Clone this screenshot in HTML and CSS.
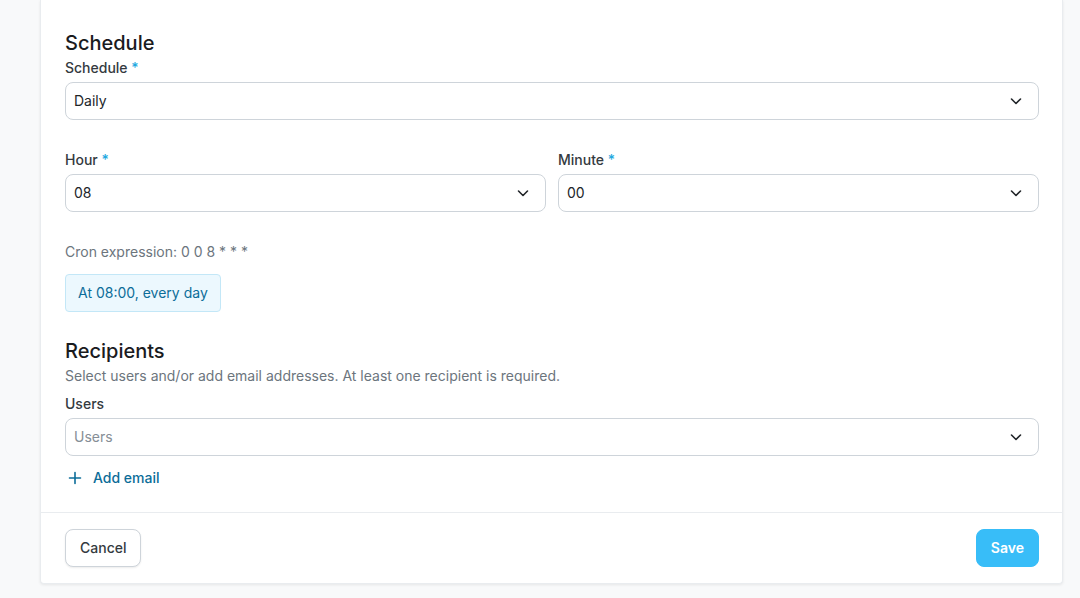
FILE: index.html
```html
<!DOCTYPE html>
<html lang="en">
<head>
    <meta charset="UTF-8">
    <meta name="viewport" content="width=device-width, initial-scale=1.0">
    <title>Report schedule</title>
    <link rel="stylesheet" href="styles.css">
</head>
<body>
    <div class="page">
        <div class="card">
            <div class="card-body">
                <!-- Schedule -->
                <h2 class="section-title">Schedule</h2>
                <label class="field-label">Schedule <span class="req">*</span></label>
                <div class="select">
                    <span>Daily</span>
                    <svg class="chevron" viewBox="0 0 16 16"><path d="M3.5 6l4.5 4.5 4.5-4.5"/></svg>
                </div>

                <div class="row">
                    <div class="col">
                        <label class="field-label">Hour <span class="req">*</span></label>
                        <div class="select">
                            <span>08</span>
                            <svg class="chevron" viewBox="0 0 16 16"><path d="M3.5 6l4.5 4.5 4.5-4.5"/></svg>
                        </div>
                    </div>
                    <div class="col">
                        <label class="field-label">Minute <span class="req">*</span></label>
                        <div class="select">
                            <span>00</span>
                            <svg class="chevron" viewBox="0 0 16 16"><path d="M3.5 6l4.5 4.5 4.5-4.5"/></svg>
                        </div>
                    </div>
                </div>

                <p class="cron">Cron expression: 0 0 8 * * *</p>
                <div class="badge">At 08:00, every day</div>

                <!-- Recipients -->
                <h2 class="section-title recipients">Recipients</h2>
                <p class="hint">Select users and/or add email addresses. At least one recipient is required.</p>
                <label class="field-label users-label">Users</label>
                <div class="select">
                    <span class="placeholder">Users</span>
                    <svg class="chevron" viewBox="0 0 16 16"><path d="M3.5 6l4.5 4.5 4.5-4.5"/></svg>
                </div>

                <button class="link-btn">
                    <svg class="plus" viewBox="0 0 16 16"><path d="M8 2.5v11M2.5 8h11"/></svg>
                    Add email
                </button>
            </div>

            <div class="card-footer">
                <button class="btn btn-default">Cancel</button>
                <button class="btn btn-primary">Save</button>
            </div>
        </div>
    </div>
</body>
</html>
```

FILE: styles.css
```css
* {
    box-sizing: border-box;
}

body {
    margin: 0;
    padding: 0;
    background: #f8f9fa;
    font-family: Inter, "Noto Sans", sans-serif;
    color: #212529;
    font-size: 14px;
    line-height: 20px;
}

.page {
    padding: 0 17px 15px 40px;
}

.card {
    background: #fff;
    border: 1px solid #e9ecef;
    border-top: none;
    border-radius: 0 0 4px 4px;
    box-shadow: 0 1px 3px rgba(0, 0, 0, 0.08);
}

.card-body {
    padding: 29px 23px 24px 24px;
    display: flex;
    flex-direction: column;
    align-items: flex-start;
}

.section-title {
    margin: 0;
    font-size: 20px;
    line-height: 28px;
    font-weight: 500;
    color: #1a1b1e;
}

.section-title.recipients {
    margin-top: 25px;
}

.field-label {
    display: block;
    font-weight: 500;
    color: #343a40;
    margin: 1px 0 4px;
}

.req {
    color: #22a8e0;
}

.select {
    width: 100%;
    height: 38px;
    border: 1px solid #ced4da;
    border-radius: 8px;
    padding: 0 14px 0 8px;
    display: flex;
    align-items: center;
    justify-content: space-between;
    color: #212529;
}

.placeholder {
    color: #868e96;
}

.chevron {
    width: 16px;
    height: 16px;
    fill: none;
    stroke: #212529;
    stroke-width: 1.6;
    stroke-linecap: round;
    stroke-linejoin: round;
}

.row {
    width: 100%;
    display: flex;
    gap: 12px;
    margin-top: 29px;
}

.col {
    flex: 1;
}

.cron {
    margin: 30px 0 0;
    color: #6c757d;
}

.badge {
    margin-top: 12px;
    height: 38px;
    padding: 0 12px;
    display: flex;
    align-items: center;
    background: #ecf8fe;
    border: 1px solid #c3e7f7;
    border-radius: 4px;
    color: #0c6d99;
}

.hint {
    margin: 1px 0 0;
    color: #6c757d;
}

.users-label {
    margin-top: 8px;
}

.link-btn {
    margin-top: 12px;
    padding: 0 0 0 2px;
    border: none;
    background: none;
    font: inherit;
    font-weight: 500;
    color: #0c6d99;
    display: flex;
    align-items: center;
    gap: 10px;
    cursor: pointer;
}

.plus {
    width: 16px;
    height: 16px;
    fill: none;
    stroke: #0c6d99;
    stroke-width: 1.6;
    stroke-linecap: round;
}

.card-footer {
    border-top: 1px solid #e9ecef;
    padding: 16px 23px 16px 24px;
    display: flex;
    justify-content: space-between;
}

.btn {
    height: 38px;
    padding: 0 14px;
    border-radius: 8px;
    font: inherit;
    font-weight: 500;
    cursor: pointer;
}

.btn-default {
    background: #fff;
    border: 1px solid #ced4da;
    color: #343a40;
    box-shadow: 0 1px 2px rgba(0, 0, 0, 0.08);
}

.btn-primary {
    background: #38bdf8;
    border: 1px solid #38bdf8;
    color: #fff;
    font-weight: 600;
}
```
